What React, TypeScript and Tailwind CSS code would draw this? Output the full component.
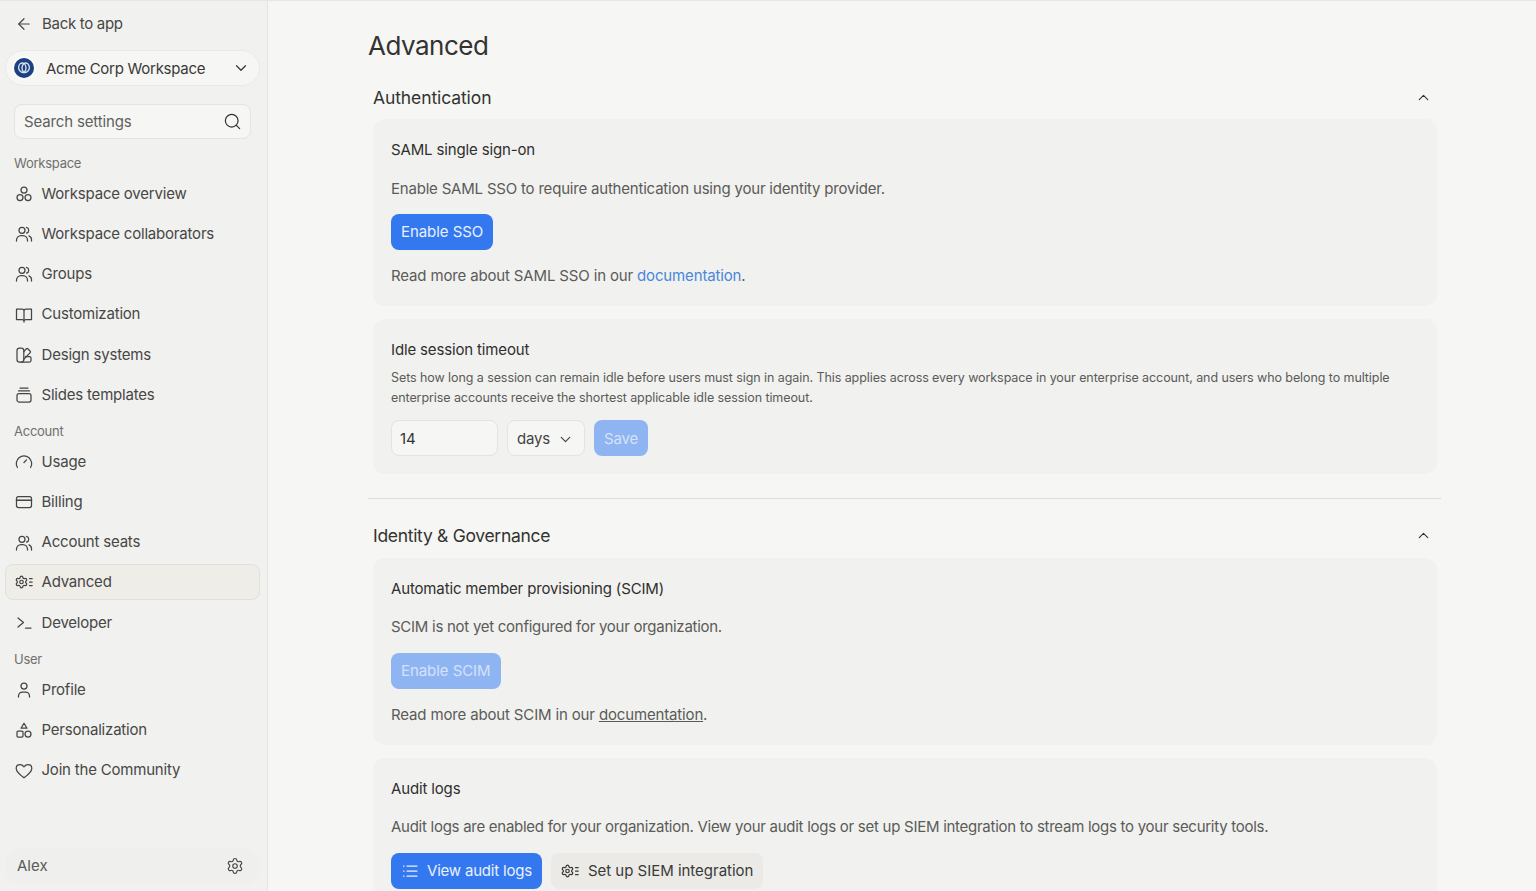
import React from "react";
import { ArrowLeft, ChevronDown, ChevronUp, Search, Settings } from "lucide-react";

const Ic = ({ children }: { children: React.ReactNode }) => (
  <svg width="18" height="18" viewBox="0 0 18 18" fill="none" stroke="currentColor" strokeWidth="1.25" strokeLinecap="round" strokeLinejoin="round" className="shrink-0">{children}</svg>
);
const Overview = () => (<Ic><circle cx="9" cy="5" r="3" /><circle cx="5" cy="12.5" r="3" /><circle cx="13" cy="12.5" r="3" /></Ic>);
const Users = () => (<Ic><circle cx="7" cy="5.3" r="3" /><path d="M1.5 16v-1a4.5 4.5 0 0 1 4.5-4.5h2a4.5 4.5 0 0 1 4.5 4.5v1" /><path d="M11.5 2.4a3 3 0 0 1 0 5.8" /><path d="M14 10.8a4 4 0 0 1 2.5 3.7V16" /></Ic>);
const Book = () => (<Ic><path d="M9 16V5a2 2 0 0 0-2-2H1.5v10.5H7a2 2 0 0 1 2 2 2 2 0 0 1 2-2h5.5V3H11a2 2 0 0 0-2 2" /></Ic>);
const Design = () => (<Ic><rect x="2" y="2" width="6.8" height="14" rx="2.6" /><path d="m8.8 5.6 2.6-2.8a1 1 0 0 1 1.4 0l2.4 2.4a1 1 0 0 1 0 1.4l-6.4 6.6" /><path d="M10.5 10.5h4a1.5 1.5 0 0 1 1.5 1.5v2.5a1.5 1.5 0 0 1-1.5 1.5H6" /></Ic>);
const Slides = () => (<Ic><path d="M5 2h8M3.5 4.8h11" /><rect x="2" y="7.5" width="14" height="8.5" rx="2" /></Ic>);
const Usage = () => (<Ic><path d="M2.4 14.5a7.7 7.7 0 1 1 13.2 0" /><path d="M9 9.5 11.5 6.8" /></Ic>);
const Billing = () => (<Ic><rect x="1.5" y="3.5" width="15" height="11" rx="2" /><path d="M1.5 7.2h15" strokeWidth="1.5" /></Ic>);
const Term = () => (<Ic><path d="m3 4 5.5 4.5L3 13" /><path d="M10.5 14h5.5" /></Ic>);
const Person = () => (<Ic><circle cx="9" cy="5" r="3" /><path d="M3.5 16v-1a4 4 0 0 1 4-4h3a4 4 0 0 1 4 4v1" /></Ic>);
const ShapesIc = () => (<Ic><path d="M9 2.2 12 7.2H6Z" /><rect x="2" y="10" width="6" height="6" rx="1" /><circle cx="13" cy="13" r="3" /></Ic>);
const HeartIc = () => (<Ic><path d="M9 15.8C4 12 1.2 9.6 1.2 6.4 1.2 4 3 2.6 5 2.6c1.6 0 3 .8 4 2.2 1-1.4 2.4-2.2 4-2.2 2 0 3.8 1.4 3.8 3.8 0 3.2-2.8 5.6-7.8 9.4Z" /></Ic>);
const GearLines = () => (
  <Ic>
    <Settings x={-0.5} y={2} width={14} height={14} strokeWidth={2.1} />
    <path d="M14.5 5.5h2.7M14.5 9h2.7M14.5 12.5h2.7" />
  </Ic>
);
const ListIc = () => (<Ic><path d="M6 4h10M6 9h10M6 14h10M2.5 4h.5M2.5 9h.5M2.5 14h.5" /></Ic>);

const Nav = ({ icon, label, active }: { icon: React.ReactNode; label: string; active?: boolean }) => (
  <div className={`flex h-[40.2px] items-center ${active ? "-mt-px mb-px" : ""}`}>
    <div className={`flex h-[36px] w-full items-center rounded-lg text-[15px] tracking-[-0.2px] text-[#474745] ${active ? "gap-[8.5px] border border-[#e2e0da] bg-[#efede8] pl-[9px]" : "gap-[8.5px] pl-[10px]"}`}>
      <span className="flex w-[18px] items-center justify-center text-[#454543]">{icon}</span>
      <span>{label}</span>
    </div>
  </div>
);

const Label = ({ children }: { children: React.ReactNode }) => (
  <div className="flex h-[20px] items-center pl-[9px] text-[13px] tracking-[-0.25px] text-[#6f6f6c]">{children}</div>
);

const Logo = () => (
  <span className="flex h-[24px] w-[24px] items-center justify-center rounded-full bg-[#fbfbfa]">
    <svg width="20" height="20" viewBox="0 0 20 20" fill="none">
      <circle cx="10" cy="10" r="10" fill="#1c4080" />
      <path d="M10 14.6C7.2 14.6 4.6 12.6 4.6 9.6 4.6 7 6.2 5 8.2 5 10.6 5 12 7.4 12 10c0 2-.8 3.6-2 4.6Z" stroke="#dbe4f2" strokeWidth="1.3" />
      <path d="M10 14.6c2.8 0 5.4-2 5.4-5 0-2.6-1.6-4.6-3.6-4.6C9.4 5 8 7.4 8 10c0 2 .8 3.6 2 4.6Z" stroke="#dbe4f2" strokeWidth="1.3" />
    </svg>
  </span>
);

const Sidebar = () => (
  <aside className="flex h-full w-[268px] shrink-0 flex-col border-r border-[#e3e3df] bg-[#f1f1ef] pl-[5px] pr-[7px]">
    <div className="flex h-[46px] shrink-0 items-center gap-[9px] pl-[10px] text-[15px] tracking-[-0.3px] text-[#474745]">
      <ArrowLeft size={18} strokeWidth={1.6} />
      <span>Back to app</span>
    </div>
    <div className="mt-[3px] flex h-[36px] shrink-0 items-center rounded-full border border-[#e9e9e5] bg-[#f6f6f4] pl-[6px] pr-[9px] text-[#3a3a38]">
      <Logo />
      <span className="ml-[10px] flex-1 pt-[2px] text-[15px] tracking-[-0.27px]">Acme Corp Workspace</span>
      <ChevronDown size={18} strokeWidth={1.7} />
    </div>
    <div className="ml-[9px] mr-[9px] mt-[18px] flex h-[35px] shrink-0 items-center justify-between rounded-lg border border-[#e3e3df] bg-[#f6f6f4] pl-[9px] pr-[8px] text-[15px] tracking-[-0.15px] text-[#5f5f5c]">
      <span className="pt-[2px]">Search settings</span>
      <Search size={19} strokeWidth={1.5} className="text-[#333]" />
    </div>
    <div className="mt-[15px]"><Label>Workspace</Label></div>
    <Nav icon={<Overview />} label="Workspace overview" />
    <Nav icon={<Users />} label="Workspace collaborators" />
    <Nav icon={<Users />} label="Groups" />
    <Nav icon={<Book />} label="Customization" />
    <Nav icon={<Design />} label="Design systems" />
    <Nav icon={<Slides />} label="Slides templates" />
    <div className="mt-[7px]"><Label>Account</Label></div>
    <Nav icon={<Usage />} label="Usage" />
    <Nav icon={<Billing />} label="Billing" />
    <Nav icon={<Users />} label="Account seats" />
    <Nav icon={<GearLines />} label="Advanced" active />
    <Nav icon={<Term />} label="Developer" />
    <div className="mt-[7px]"><Label>User</Label></div>
    <Nav icon={<Person />} label="Profile" />
    <Nav icon={<ShapesIc />} label="Personalization" />
    <Nav icon={<HeartIc />} label="Join the Community" />
    <div className="mb-[7px] mt-auto flex h-[36px] shrink-0 items-center justify-between rounded-2xl bg-[#efefed] pl-[12px] pr-[16px] text-[15px] text-[#5a5a57]">
      <span>Alex</span>
      <Settings size={18} strokeWidth={1.5} className="text-[#444]" />
    </div>
  </aside>
);

const Card = ({ title, children, className }: { title: string; children: React.ReactNode; className?: string }) => (
  <section className={`rounded-xl bg-[#f1f1ef] px-[18px] ${className ?? ""}`}>
    <h3 className="text-[15px] leading-[20px] tracking-[-0.15px] text-[#2f2f2d]">{title}</h3>
    {children}
  </section>
);

const Btn = ({ children, muted, className }: { children: React.ReactNode; muted?: boolean; className?: string }) => (
  <button className={`flex h-[36px] items-center gap-[8px] rounded-lg px-[10px] text-[15px] ${muted ? "bg-[#8fb4f2] text-[#d4e2fa]" : "bg-[#3478f0] text-[#eaf1fe]"} ${className ?? "tracking-[-0.06px]"}`}>{children}</button>
);

const Head = ({ children, className }: { children: React.ReactNode; className?: string }) => (
  <div className="flex items-center justify-between text-[#333331]">
    <h2 className={`pt-px text-[17.5px] leading-[24px] ${className ?? ""}`}>{children}</h2>
    <ChevronUp size={17} strokeWidth={1.6} className="mr-[5px]" />
  </div>
);

const P = ({ children, className }: { children: React.ReactNode; className?: string }) => (
  <p className={`text-[15px] leading-[20px] text-[#5b5b58] ${className ?? ""}`}>{children}</p>
);

export default function App() {
  return (
    <div className="flex h-[891px] w-[1536px] overflow-hidden border-t border-[#e6e6e3] bg-[#f6f6f4] font-['Inter','Liberation_Sans',sans-serif]">
      <Sidebar />
      <main className="h-full flex-1 overflow-hidden pl-[100px] pr-[95px]">
        <h1 className="mt-[28px] text-[26px] leading-[34px] tracking-[-0.5px] text-[#333331]">Advanced</h1>
        <div className="mt-[22px] pl-[5px] pr-[4px]">
          <Head className="tracking-[-0.1px]">Authentication</Head>
          <Card title="SAML single sign-on" className="mt-[9px] h-[187px] pt-[21px]">
            <P className="mt-[19px] tracking-[-0.2px]">Enable SAML SSO to require authentication using your identity provider.</P>
            <div className="mt-[15px] flex"><Btn>Enable SSO</Btn></div>
            <P className="mt-[16px] tracking-[-0.15px]">Read more about SAML SSO in our <a className="text-[#4a86dc]">documentation</a>.</P>
          </Card>
          <Card title="Idle session timeout" className="mt-[13px] h-[155px] pt-[21px]">
            <p className="mt-[8px] text-[12.5px] leading-[20px] tracking-[-0.08px] text-[#5b5b58]">Sets how long a session can remain idle before users must sign in again. This applies across every workspace in your enterprise account, and users who belong to multiple enterprise accounts receive the shortest applicable idle session timeout.</p>
            <div className="mt-[12px] flex gap-[9px]">
              <div className="flex h-[36px] w-[107px] items-center rounded-lg border border-[#e3e3df] bg-[#f6f6f4] pl-[8px] pt-[2px] text-[15px] text-[#333]">14</div>
              <div className="flex h-[36px] w-[78px] items-center justify-between rounded-lg border border-[#e3e3df] bg-[#f6f6f4] pl-[9px] pr-[10px] pt-[2px] text-[15px] tracking-[-0.15px] text-[#444]">days<ChevronDown size={17} strokeWidth={1.7} /></div>
              <Btn muted className="pt-[2px] tracking-[-0.15px]">Save</Btn>
            </div>
          </Card>
        </div>
        <hr className="mb-[24px] mt-[24px] border-t border-[#deded6]" />
        <div className="pl-[5px] pr-[4px]">
          <Head className="tracking-[-0.3px]">Identity &amp; Governance</Head>
          <Card title="Automatic member provisioning (SCIM)" className="mt-[10px] h-[187px] pt-[21px]">
            <P className="mt-[18px] tracking-[-0.27px]">SCIM is not yet configured for your organization.</P>
            <div className="mt-[16px] flex"><Btn muted>Enable SCIM</Btn></div>
            <P className="mt-[16px] tracking-[-0.15px]">Read more about SCIM in our <a className="underline">documentation</a>.</P>
          </Card>
          <Card title="Audit logs" className="mt-[13px] h-[187px] pt-[21px]">
            <P className="mt-[18px] tracking-[-0.27px]">Audit logs are enabled for your organization. View your audit logs or set up SIEM integration to stream logs to your security tools.</P>
            <div className="mt-[16px] flex gap-[9px]">
              <Btn className="tracking-[-0.2px]"><ListIc />View audit logs</Btn>
              <button className="flex h-[36px] items-center gap-[9px] rounded-lg bg-[#ebeae6] px-[10px] text-[15px] tracking-[-0.02px] text-[#3a3a38]"><GearLines />Set up SIEM integration</button>
            </div>
          </Card>
        </div>
      </main>
    </div>
  );
}
